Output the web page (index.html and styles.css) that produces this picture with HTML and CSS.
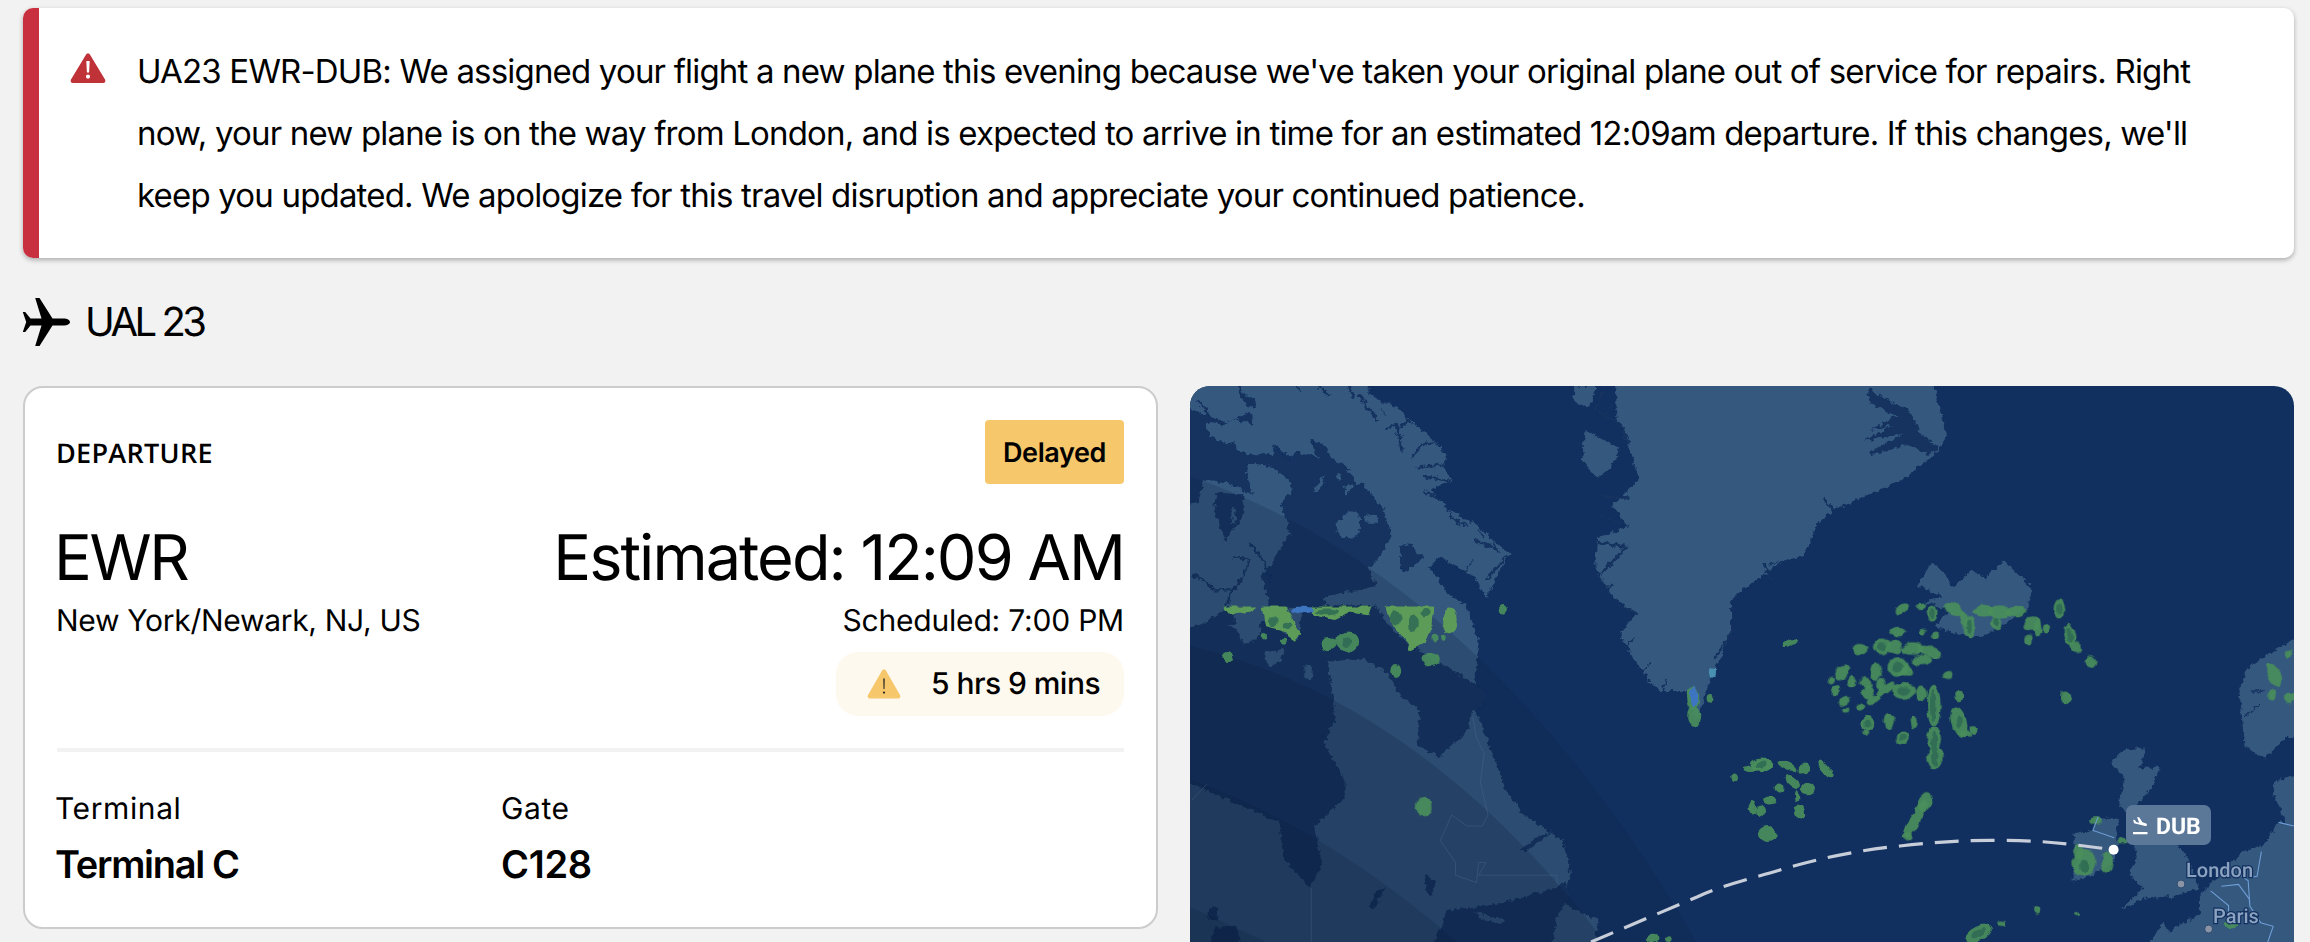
FILE: index.html
```html
<!DOCTYPE html>
<html lang="en">
<head>
<meta charset="utf-8">
<title>UAL 23</title>
<link rel="stylesheet" href="styles.css">
</head>
<body>
<main class="page">
  <section class="alert">
    <div class="alert-bar"></div>
    <svg class="alert-icon" viewBox="0 0 36 32"><path class="i-red" d="M18 1.500c-1 0-1.700.5-2.200 1.400L1 27.500c-1 1.800 0 3.500 2 3.500h30c2 0 3-1.700 2-3.500L20.200 2.900c-.5-.9-1.200-1.400-2.200-1.400z"/><path class="i-white" d="M16.300 9h3.400l-.6 11.500h-2.200zM18 22.500a2.100 2.100 0 1 1 0 4.200 2.100 2.100 0 0 1 0-4.200z"/></svg>
    <p class="alert-text">UA23 EWR-DUB: We assigned your flight a new plane this evening because we've taken your original plane out of service for repairs. Right<br>now, your new plane is on the way from London, and is expected to arrive in time for an estimated 12:09am departure. If this changes, we'll<br>keep you updated. We apologize for this travel disruption and appreciate your continued patience.</p>
  </section>

  <h1 class="flight-title">
    <svg class="plane" viewBox="0 0 48 48"><path d="M48 24c0-2-3-3.600-6.500-3.600H30.500L17.500 0h-4.300l6.300 20.400H8.500L3.200 14H.8l3.400 10-3.400 10h2.400l5.300-6.400h11L13.200 48h4.300l13-20.400h11C45 27.600 48 26 48 24z"/></svg>
    <span>UAL 23</span>
  </h1>

  <div class="columns">
    <article class="card">
      <header class="card-head">
        <span class="eyebrow">DEPARTURE</span>
        <span class="badge">Delayed</span>
      </header>
      <div class="times">
        <div class="airport">
          <div class="big big-code">EWR</div>
          <div class="city">New York/Newark, NJ, US</div>
        </div>
        <div class="clock">
          <div class="big big-time">Estimated: 12:09 AM</div>
          <div class="sched">Scheduled: 7:00 PM</div>
          <div class="delay">
            <svg class="warn" viewBox="0 0 34 30"><path class="i-amber" d="M17 .5c-1 0-1.700.5-2.200 1.400L1 26c-1 1.800 0 3.500 2 3.500h28c2 0 3-1.700 2-3.500L19.200 1.900C18.700 1 18 .5 17 .5z"/><path class="i-dark" d="M16.300 9.500h1.400l-.2 10.500h-1zM17 22.500a1 1 0 1 1 0 2.200 1 1 0 0 1 0-2.200z"/></svg>
            <span>5 hrs 9 mins</span>
          </div>
        </div>
      </div>
      <div class="divider"></div>
      <div class="facts">
        <div class="fact"><div class="fact-label">Terminal</div><div class="fact-value">Terminal C</div></div>
        <div class="fact"><div class="fact-label">Gate</div><div class="fact-value fact-code">C128</div></div>
      </div>
    </article>

    <div class="map">
      <svg class="map-svg" viewBox="0 0 1104 556" width="1104" height="556">
        <defs>
          <filter id="coast" filterUnits="userSpaceOnUse" x="-30" y="-30" width="1170" height="620">
            <feTurbulence type="fractalNoise" baseFrequency="0.2" numOctaves="3" seed="7" result="n"/>
            <feDisplacementMap in="SourceGraphic" in2="n" scale="7" xChannelSelector="R" yChannelSelector="G"/>
          </filter>
          <filter id="storm" filterUnits="userSpaceOnUse" x="-30" y="-30" width="1170" height="620">
            <feTurbulence type="fractalNoise" baseFrequency="0.1" numOctaves="2" seed="3" result="n"/>
            <feDisplacementMap in="SourceGraphic" in2="n" scale="6" xChannelSelector="R" yChannelSelector="G"/>
          </filter>
          <clipPath id="strip"><rect x="0" y="648" width="1600" height="1000"/></clipPath>
        </defs>

        <g filter="url(#coast)">
          <g transform="translate(-10,-16) scale(0.3827,0.3648)">
            <path class="land" d="M-20 640L745 640 780 740 770 870 770 930 800 1010 830 1090 850 1150 900 1220 1000 1290 1020 1380 1000 1460 1090 1510 1075 1650 -20 1650Z"/>
          </g>
          <g transform="scale(0.3333)">
            <path class="land" d="M-60 -60L540 -60 535 25 630 70 650 95 735 165 770 210 760 240 785 285 720 310 780 375 850 410 960 505 925 560 890 635 850 570 800 540 745 510 720 545 770 620 830 660 865 760 700 760 -60 760Z"/>
            <path class="water" d="M140 -20L160 25 195 40 200 65 170 60 150 30Z"/>
            <path class="water" d="M-60 30L25 80 60 90 110 110 185 78 190 115 130 100 100 115 45 110 60 150 110 175 135 165 140 195 175 205 250 205 250 180 300 215 320 195 385 215 360 160 400 175 425 215 470 240 495 290 520 295 560 345 580 370 605 450 570 510 535 545 560 600 410 630 395 665 240 665 215 570 240 540 300 440 270 350 305 315 295 280 240 240 175 230 170 270 190 325 130 300 60 280 40 285 25 350 -60 370Z"/>
            <path class="water" d="M80 320L160 325 160 390 135 420 105 465 72 370Z"/>
            <path class="land" d="M124 372L136 366 136 412 125 414Z"/>
            <path class="land" d="M370 312L405 265 395 300 380 316Z"/>
            <path class="land" d="M435 265L455 265 450 285Z"/>
            <path class="land" d="M460 300L490 295 470 330Z"/>
            <path class="land" d="M440 430C445 370 510 360 510 400L510 430C500 460 450 470 440 430Z"/>
            <path class="land" d="M522 390L560 385 565 410 525 410Z"/>
            <path class="water" d="M630 480L660 475 702 515 640 560 630 530Z"/>
            <path class="fjord" d="M505 25L530 60 565 105M475 -5L492 35M380 -5L420 30M315 -5L335 15M590 130L620 112 635 195M625 130L660 100M665 212L700 175 742 168M680 245L760 235M700 270L780 285M700 315L770 350M780 390L830 420M850 460L920 490M890 580L950 510M180 475L225 530M225 530L240 585M130 515L180 520 160 570 130 610 105 665M5 565L50 590 70 610 125 610M60 90L20 40M250 180L300 215"/>
            <path class="fjord-thin" d="M590 90L575 70M640 150L610 140M760 345L730 310M810 420L770 370M880 450L860 430M925 500L900 450M815 570L850 520M770 570L800 540"/>
          </g>
          <g transform="translate(-10,-16) scale(0.3827,0.3648)">
            <path class="water" d="M-20 720L60 695 130 650 170 750 215 690 310 735 320 645 510 645 560 720 640 780 720 830 800 880 790 925 765 930 750 990 680 1060 620 1030 625 930 570 885 540 830 480 790 385 800 400 900 405 960 375 1020 430 1120 430 1175 350 1250 372 1360 340 1420 270 1340 260 1240 110 1170 -20 1112Z"/>
            <path class="land" d="M220 775L270 765 265 800 230 815Z"/>
            <path class="land" d="M325 810L348 805 345 850 325 840Z"/>
            <path class="land" d="M125 700L185 690 215 715 190 745 165 750 150 715Z"/>
            <path class="water" d="M630 1650L700 1480 820 1465 950 1430 1005 1405 1020 1440 985 1500 960 1650Z"/>
            <path class="land" d="M770 1485L850 1510 840 1520 790 1505Z"/>
            <path class="land" d="M1000 1470L1085 1515 1060 1535 1000 1520Z"/>
            <path class="water" d="M890 1315L930 1280 975 1265 950 1285 905 1320Z"/>
            <path class="water" d="M640 1385L670 1400 655 1445 640 1420Z"/>
            <path class="water" d="M495 1470L510 1430 540 1415 520 1450 505 1480Z"/>
            <path class="water" d="M75 1470L98 1470 98 1508 75 1505Z"/>
            <path class="water" d="M60 1650L90 1530 150 1525 165 1650Z"/>
            <path class="land" d="M1060 165L1150 215 1130 260 1090 295 1050 250Z"/>
            <path class="land" d="M1030 44L1090 44 1070 100 1030 90Z"/>
            <path class="land" d="M1140 -20L1568 -20 1568 530 1500 580 1440 630 1440 720 1385 850 1350 960 1320 880 1250 880 1190 800 1150 720 1190 670 1130 620 1085 540 1090 460 1170 430 1130 370 1200 300 1170 200 1140 130Z"/>
            <path class="fjord" d="M1110 40L1085 110 1150 150 1175 200M1140 90L1100 130M1100 345L1175 350M1095 400L1172 430M1085 470L1165 485 1100 560M1140 640L1195 672M1440 720L1400 790M1520 540L1568 522"/>
            <path class="fjord-thin" d="M1100 600L1130 590M1160 760L1190 730M1205 830L1230 800M1260 880L1270 850M1400 830L1425 760M1450 680L1470 630M1490 590L1530 560"/>
          </g>
          <g transform="translate(560,-16) scale(0.3571,0.3648)">
            <path class="land" d="M-80 -20L505 -20 520 60 550 180 530 220 430 300 240 380 190 420 150 510 60 530 0 585 -80 600Z"/>
            <path class="water" d="M330 50L400 90 450 115 475 170 530 215 500 235 440 205 345 232 335 225 430 175 318 195 400 150 340 165 410 125 335 90Z"/>
            <path class="fjord" d="M205 350L240 392M40 530L60 580"/>
            <path class="land" d="M470 590L510 525 550 560 565 600 620 550 660 570 710 520 790 600 780 650 720 690 640 735 520 705 555 660 490 635 540 620Z"/>
            <path class="land" d="M905 1275L960 1260 975 1225 1030 1230 1028 1300 1020 1345 960 1385 900 1400 915 1340Z"/>
            <path class="land" d="M1010 1075L1050 1040 1110 1035 1090 1090 1150 1090 1120 1150 1085 1190 1120 1215 1190 1290 1225 1340 1258 1420 1200 1440 1100 1450 1040 1478 1100 1420 1060 1380 1085 1340 1075 1300 1080 1240 1030 1190 1050 1120Z"/>
            <path class="land" d="M1068 1650L1160 1510 1170 1540 1260 1490 1260 1440 1380 1320 1440 1300 1480 1240 1600 1240 1600 1650Z"/>
            <path class="land" d="M1600 695L1400 810 1370 870 1385 1030 1440 1065 1500 1010 1600 990Z"/>
            <path class="land" d="M1465 1130L1600 1090 1600 1290 1500 1240 1470 1170Z"/>
            <path class="fjord-thin" d="M1400 880L1445 880M1385 950L1430 915"/>
          </g>
        </g>

        <g transform="translate(-10,-16) scale(0.3827,0.3648)">
          <path class="night" d="M-20 275Q830 560 1420 1700L-20 1700Z"/>
          <path class="night" d="M-20 745Q680 900 1200 1700L-20 1700Z"/>
          <path class="night" d="M-20 1105Q430 1260 860 1700L-20 1700Z"/>
          <path class="night" d="M-20 1450L500 1700 -20 1700Z"/>
          <path class="border" d="M765 950L775 1010 795 1050 785 1130 805 1220 790 1250 750 1250 710 1220 680 1290 720 1350 720 1385 775 1405 780 1350 800 1350 780 1385 985 1385 985 1410"/>
          <path class="border" d="M343 1420V1568M30 1180L70 1135"/>
        </g>

        <g filter="url(#storm)">
          <g transform="translate(-10,-16) scale(0.3827,0.3648)">
            <g clip-path="url(#strip)">
              <path class="rain-lime" d="M530 640H665L660 700 640 745 600 768 592 745 560 705Z"/>
              <path class="rain-lime" d="M215 640H272L315 722 300 742 262 715 225 705Z"/>
              <path class="rain-lime" d="M110 640H200L190 662 130 668Z"/>
              <path class="rain-lime" d="M340 640H505L495 672 440 665 400 685 350 672Z"/>
              <ellipse class="rain-lime" cx="705" cy="685" rx="18" ry="34"/>
              <ellipse class="rain-blue" cx="320" cy="658" rx="32" ry="10"/>
              <ellipse class="rain-core" cx="245" cy="690" rx="13" ry="16"/><ellipse class="rain-core" cx="280" cy="700" rx="14" ry="10"/><ellipse class="rain-core" cx="385" cy="663" rx="30" ry="9"/>
              <ellipse class="rain-core" cx="565" cy="680" rx="14" ry="18"/><ellipse class="rain-core" cx="610" cy="695" rx="14" ry="22"/><ellipse class="rain-core" cx="640" cy="665" rx="12" ry="10"/>
            </g>
            <ellipse class="rain" cx="845" cy="657" rx="10" ry="11"/><ellipse class="rain" cx="125" cy="787" rx="10" ry="9"/><ellipse class="rain" cx="390" cy="750" rx="18" ry="16"/><ellipse class="rain" cx="438" cy="745" rx="28" ry="26"/><ellipse class="rain-core" cx="435" cy="745" rx="12" ry="14"/><ellipse class="rain" cx="655" cy="792" rx="22" ry="18"/><ellipse class="rain" cx="565" cy="825" rx="11" ry="17"/><ellipse class="rain" cx="218" cy="730" rx="5" ry="7"/><ellipse class="rain" cx="270" cy="745" rx="7" ry="6"/><ellipse class="rain" cx="665" cy="735" rx="6" ry="10"/><ellipse class="rain" cx="690" cy="735" rx="5" ry="8"/>
            <ellipse class="rain" cx="1345" cy="950" rx="15" ry="27"/><ellipse class="rain" cx="1340" cy="900" rx="15" ry="30"/><ellipse class="rain-blue" cx="1343" cy="895" rx="11" ry="26"/><ellipse class="rain-sky" cx="1390" cy="830" rx="8" ry="12"/><ellipse class="rain" cx="1385" cy="900" rx="7" ry="10"/>
            <ellipse class="rain" cx="638" cy="1198" rx="20" ry="24"/><ellipse class="rain" cx="1520" cy="1083" rx="24" ry="16"/><ellipse class="rain-core" cx="1522" cy="1082" rx="14" ry="10"/><ellipse class="rain" cx="1490" cy="1092" rx="18" ry="5"/><ellipse class="rain" cx="1448" cy="1118" rx="8" ry="10"/><ellipse class="rain" cx="1235" cy="1560" rx="16" ry="10"/><ellipse class="rain" cx="1280" cy="1560" rx="8" ry="6"/>
          </g>
          <g transform="translate(560,-16) scale(0.3571,0.3648)">
            <ellipse class="rain" cx="425" cy="655" rx="20" ry="10" transform="rotate(-30 425 655)"/><ellipse class="rain" cx="478" cy="648" rx="10" ry="8"/><ellipse class="rain" cx="510" cy="668" rx="13" ry="20"/><ellipse class="rain" cx="415" cy="717" rx="20" ry="11"/><ellipse class="rain" cx="518" cy="728" rx="9" ry="9"/><ellipse class="rain" cx="483" cy="717" rx="6" ry="6"/><ellipse class="rain" cx="110" cy="748" rx="18" ry="6" transform="rotate(-25 110 748)"/>
            <ellipse class="rain" cx="570" cy="655" rx="30" ry="15" transform="rotate(20 570 655)"/><ellipse class="rain" cx="615" cy="705" rx="15" ry="28"/><ellipse class="rain" cx="600" cy="680" rx="10" ry="20"/><ellipse class="rain" cx="655" cy="660" rx="28" ry="14"/><ellipse class="rain" cx="700" cy="665" rx="28" ry="18"/><ellipse class="rain" cx="690" cy="695" rx="14" ry="14"/><ellipse class="rain" cx="745" cy="662" rx="30" ry="14"/><ellipse class="rain" cx="790" cy="695" rx="22" ry="18"/><ellipse class="rain" cx="805" cy="710" rx="10" ry="18"/><ellipse class="rain" cx="830" cy="708" rx="8" ry="12"/><ellipse class="rain" cx="780" cy="740" rx="10" ry="13"/><ellipse class="rain" cx="868" cy="655" rx="13" ry="24"/><ellipse class="rain" cx="895" cy="725" rx="13" ry="28" transform="rotate(-15 895 725)"/><ellipse class="rain" cx="912" cy="760" rx="18" ry="12" transform="rotate(40 912 760)"/><ellipse class="rain" cx="955" cy="800" rx="16" ry="16"/><ellipse class="rain" cx="884" cy="897" rx="14" ry="14"/>
            <ellipse class="rain-core" cx="615" cy="705" rx="9" ry="18"/><ellipse class="rain-core" cx="690" cy="690" rx="9" ry="10"/><ellipse class="rain-core" cx="868" cy="655" rx="8" ry="16"/><ellipse class="rain-core" cx="895" cy="725" rx="7" ry="20" transform="rotate(-15 895 725)"/><ellipse class="rain-core" cx="510" cy="668" rx="7" ry="13"/>
            <ellipse class="rain" cx="308" cy="766" rx="22" ry="13"/><ellipse class="rain" cx="368" cy="758" rx="22" ry="20"/><ellipse class="rain" cx="405" cy="760" rx="18" ry="18"/><ellipse class="rain" cx="455" cy="765" rx="28" ry="14"/><ellipse class="rain" cx="500" cy="770" rx="35" ry="12" transform="rotate(20 500 770)"/><ellipse class="rain" cx="480" cy="795" rx="28" ry="12"/><ellipse class="rain" cx="415" cy="815" rx="28" ry="24"/><ellipse class="rain" cx="435" cy="825" rx="20" ry="14"/><ellipse class="rain" cx="352" cy="825" rx="13" ry="22"/><ellipse class="rain" cx="555" cy="835" rx="13" ry="13"/><ellipse class="rain" cx="258" cy="828" rx="24" ry="13" transform="rotate(-40 258 828)"/><ellipse class="rain" cx="225" cy="852" rx="6" ry="8"/><ellipse class="rain" cx="240" cy="878" rx="8" ry="14" transform="rotate(30 240 878)"/><ellipse class="rain" cx="285" cy="855" rx="13" ry="15"/><ellipse class="rain" cx="325" cy="858" rx="18" ry="12" transform="rotate(30 325 858)"/><ellipse class="rain" cx="365" cy="860" rx="10" ry="14"/><ellipse class="rain" cx="330" cy="885" rx="14" ry="16"/><ellipse class="rain" cx="380" cy="875" rx="30" ry="10" transform="rotate(-35 380 875)"/><ellipse class="rain" cx="345" cy="905" rx="18" ry="8" transform="rotate(-30 345 905)"/><ellipse class="rain" cx="265" cy="908" rx="16" ry="7" transform="rotate(-30 265 908)"/><ellipse class="rain" cx="268" cy="934" rx="8" ry="6"/><ellipse class="rain" cx="310" cy="925" rx="12" ry="8" transform="rotate(-40 310 925)"/><ellipse class="rain" cx="430" cy="880" rx="30" ry="20"/><ellipse class="rain" cx="480" cy="885" rx="16" ry="18"/><ellipse class="rain" cx="515" cy="920" rx="17" ry="55"/><ellipse class="rain" cx="586" cy="892" rx="9" ry="14"/><ellipse class="rain" cx="330" cy="968" rx="16" ry="20"/><ellipse class="rain" cx="390" cy="962" rx="11" ry="20"/><ellipse class="rain" cx="460" cy="965" rx="8" ry="15"/><ellipse class="rain" cx="428" cy="1008" rx="15" ry="18"/><ellipse class="rain" cx="515" cy="1010" rx="18" ry="30"/><ellipse class="rain" cx="518" cy="1060" rx="20" ry="30"/><ellipse class="rain" cx="323" cy="995" rx="6" ry="6"/><ellipse class="rain" cx="585" cy="965" rx="20" ry="42" transform="rotate(-15 585 965)"/><ellipse class="rain" cx="605" cy="998" rx="12" ry="6"/><ellipse class="rain" cx="625" cy="985" rx="8" ry="10"/>
            <ellipse class="rain-core" cx="368" cy="758" rx="14" ry="12"/><ellipse class="rain-core" cx="415" cy="815" rx="16" ry="14"/><ellipse class="rain-core" cx="430" cy="880" rx="18" ry="10"/><ellipse class="rain-core" cx="513" cy="920" rx="9" ry="45"/><ellipse class="rain-core" cx="330" cy="968" rx="9" ry="12"/><ellipse class="rain-core" cx="428" cy="1008" rx="9" ry="11"/><ellipse class="rain-core" cx="515" cy="1020" rx="9" ry="30"/><ellipse class="rain-core" cx="518" cy="1065" rx="11" ry="20"/><ellipse class="rain-core" cx="585" cy="965" rx="8" ry="18"/>
            <ellipse class="rain" cx="32" cy="1082" rx="28" ry="18"/><ellipse class="rain-core" cx="32" cy="1082" rx="17" ry="11"/><ellipse class="rain" cx="105" cy="1085" rx="28" ry="10" transform="rotate(25 105 1085)"/><ellipse class="rain" cx="153" cy="1095" rx="15" ry="14"/><ellipse class="rain" cx="210" cy="1092" rx="28" ry="9" transform="rotate(50 210 1092)"/><ellipse class="rain" cx="120" cy="1128" rx="22" ry="10" transform="rotate(40 120 1128)"/><ellipse class="rain" cx="162" cy="1148" rx="18" ry="16"/><ellipse class="rain" cx="80" cy="1145" rx="12" ry="12"/><ellipse class="rain" cx="132" cy="1168" rx="4" ry="14"/><ellipse class="rain" cx="55" cy="1180" rx="16" ry="9"/><ellipse class="rain" cx="140" cy="1213" rx="12" ry="20" transform="rotate(-15 140 1213)"/><ellipse class="rain" cx="30" cy="1210" rx="10" ry="14"/><ellipse class="rain" cx="8" cy="1200" rx="10" ry="14"/><ellipse class="rain" cx="50" cy="1272" rx="26" ry="20"/>
            <ellipse class="rain" cx="465" cy="1230" rx="14" ry="60" transform="rotate(30 465 1230)"/><ellipse class="rain" cx="490" cy="1185" rx="18" ry="24" transform="rotate(20 490 1185)"/><ellipse class="rain" cx="440" cy="1280" rx="16" ry="10"/>
            <ellipse class="rain" cx="970" cy="1235" rx="16" ry="10"/><ellipse class="rain" cx="935" cy="1350" rx="30" ry="35"/><ellipse class="rain-core" cx="935" cy="1360" rx="14" ry="18"/><ellipse class="rain" cx="1000" cy="1345" rx="14" ry="28"/><ellipse class="rain" cx="920" cy="1320" rx="14" ry="20"/><ellipse class="rain" cx="1045" cy="1290" rx="12" ry="6"/>
            <ellipse class="rain" cx="803" cy="1480" rx="8" ry="8"/><ellipse class="rain" cx="915" cy="1492" rx="8" ry="3"/><ellipse class="rain" cx="640" cy="1545" rx="38" ry="18" transform="rotate(-25 640 1545)"/><ellipse class="rain-core" cx="640" cy="1545" rx="22" ry="10" transform="rotate(-25 640 1545)"/><ellipse class="rain" cx="706" cy="1518" rx="12" ry="4"/><ellipse class="rain" cx="1350" cy="1518" rx="16" ry="10"/>
            <ellipse class="rain" cx="1468" cy="835" rx="16" ry="34" transform="rotate(-25 1468 835)"/><ellipse class="rain" cx="1460" cy="890" rx="7" ry="14"/><ellipse class="rain" cx="1512" cy="900" rx="12" ry="14"/><ellipse class="rain" cx="1505" cy="780" rx="8" ry="14"/>
          </g>
        </g>

        <g transform="translate(560,-16) scale(0.3571,0.3648)">
          <path class="border-eu" d="M975 1225L960 1262 1020 1282M1290 1428L1340 1468 1340 1490M1320 1415L1368 1410 1398 1450 1400 1470M1368 1380L1395 1400 1400 1470 1430 1515 1465 1525 1450 1568M1432 1320L1420 1388 1408 1390M1480 1240L1523 1250"/>
        </g>

        <path class="route" d="M401 556L507 511C530 500 560 493 590 484 620 475 660 465 710 460 745 456 775 454 810 454.500 850 454 880 458 923.600 463.800"/>
        <circle class="dot" cx="923.600" cy="463.800" r="5"/>
        <circle class="city-dot" cx="991" cy="498" r="4"/>
        <circle class="city-dot" cx="1018.600" cy="543" r="4"/>
        <text class="place" x="996" y="491">London</text>
        <text class="place" x="1023" y="537">Paris</text>
        <rect class="tag" x="936" y="419" width="85" height="40" rx="7"/>
        <path class="tag-icon" d="M943 446h14.500v2.200H943zM947 431l2.400.5 3 4.700 3.200 1.100c2.100.8 1.700 3.200-.5 2.700L944 437.200l-.8-3.400 1.700.3 1.300 2 3 .6z"/>
        <text class="tag-text" x="966" y="448">DUB</text>
      </svg>
    </div>
  </div>
</main>
</body>
</html>
```

FILE: styles.css
```css
* { box-sizing: border-box; }
html, body { margin: 0; height: 100%; }
body {
  background: #f2f2f2;
  color: #000;
  font-family: Inter, "Liberation Sans", sans-serif;
  text-rendering: geometricPrecision;
  overflow: hidden;
}
.page { padding: 8px 16px 0 23px; width: 2310px; height: 942px; }

.alert {
  display: flex;
  align-items: flex-start;
  width: 2271px;
  height: 250px;
  background: #fff;
  border-radius: 10px;
  overflow: hidden;
  box-shadow: 0 2px 5px rgba(0,0,0,.3);
}
.alert-bar { flex: none; width: 16px; height: 100%; background: #c8303f; }
.alert-icon { flex: none; width: 36px; height: 32px; margin: 44px 31px 0 31px; }
.i-red { fill: #bf3238; }
.i-white { fill: #fff; }
.i-amber { fill: #f6c76b; }
.i-dark { fill: #222; }
.alert-text {
  margin: 32px 0 0;
  font-size: 33px;
  line-height: 62px;
  letter-spacing: -.82px;
  white-space: nowrap;
}

.flight-title {
  display: flex;
  align-items: center;
  gap: 15px;
  height: 48px;
  margin: 40px 0;
  font-size: 40px;
  font-weight: 400;
  letter-spacing: -3.500px;
  line-height: 48px;
}
.plane { flex: none; width: 48px; height: 48px; margin-left: -1px; }

.columns { display: grid; grid-template-columns: 1135px 1104px; gap: 32px; align-items: start; }

.card {
  height: 543px;
  padding: 32px 32px 38px;
  background: #fff;
  border: 2px solid #ccc;
  border-radius: 20px;
}
.card-head { display: flex; justify-content: space-between; align-items: center; height: 64px; }
.eyebrow { margin-left: -1px; font-family: "Open Sans", sans-serif; font-size: 27px; font-weight: 600; letter-spacing: .3px; }
.badge {
  display: flex;
  align-items: center;
  height: 64px;
  padding: 0 18px;
  background: #f6c76b;
  border-radius: 4px;
  font-size: 27px;
  font-weight: 600;
  letter-spacing: -.4px;
}

.times { display: flex; justify-content: space-between; margin-top: 36px; height: 196px; }
.big { font-size: 63px; line-height: 76px; white-space: nowrap; }
.big-code { margin-left: -3px; letter-spacing: -2.400px; }
.big-time { letter-spacing: -1.950px; }
.city, .sched { margin-top: 5px; font-size: 30px; line-height: 40px; white-space: nowrap; }
.city { margin-left: -1px; letter-spacing: -.3px; }
.sched { letter-spacing: -.2px; text-align: right; }
.clock { display: flex; flex-direction: column; align-items: flex-end; }
.delay {
  display: flex;
  align-items: center;
  gap: 30px;
  height: 64px;
  margin-top: 11px;
  padding: 0 24px 0 31px;
  background: #fef9ee;
  border-radius: 22px;
  font-size: 30px;
  font-weight: 500;
  letter-spacing: -.55px;
}
.warn { flex: none; width: 34px; height: 30px; }

.divider { height: 4px; margin-top: 32px; background: #f2f2f2; }
.facts { display: grid; grid-template-columns: 446px 1fr; margin-top: 37px; }
.fact { margin-left: -2px; }
.fact-label { font-size: 30px; line-height: 40px; letter-spacing: .6px; }
.fact-value { margin-top: 12px; font-size: 38px; line-height: 48px; font-weight: 600; letter-spacing: -1.300px; }
.fact-code { letter-spacing: -.3px; }

.map { height: 556px; overflow: hidden; border-radius: 20px 20px 0 0; background: #12305f; }
.map-svg { display: block; }
.land { fill: #36597f; }
.water { fill: #12305f; }
.fjord { fill: none; stroke: #12305f; stroke-width: 7; }
.fjord-thin { fill: none; stroke: #12305f; stroke-width: 4; }
.night { fill: #0a1e3c; opacity: .2; }
.border { fill: none; stroke: #5b7596; stroke-width: 2; opacity: .4; }
.border-eu { fill: none; stroke: #6f9fd6; stroke-width: 3; }
.rain { fill: #4a8f5c; stroke: #4a8f5c; stroke-width: 4; opacity: .92; }
.rain-lime { fill: #5b9c58; }
.rain-core { fill: #2f6b55; opacity: .85; }
.rain-blue { fill: #3d74c0; }
.rain-sky { fill: #4a8fb0; }
.route { fill: none; stroke: #c8ced9; stroke-width: 3.200; stroke-dasharray: 24 12; }
.dot { fill: #fff; }
.city-dot { fill: #8b94a5; stroke: #2c4a70; stroke-width: 1; }
.place {
  font-family: Roboto, sans-serif;
  font-size: 20px;
  font-weight: 500;
  fill: #8ba3c0;
  stroke: #12305f;
  stroke-width: 2.500;
  paint-order: stroke;
}
.tag { fill: #5c7899; }
.tag-icon { fill: #fff; }
.tag-text { font-family: Roboto, sans-serif; font-size: 23px; font-weight: 700; fill: #fff; }
```
